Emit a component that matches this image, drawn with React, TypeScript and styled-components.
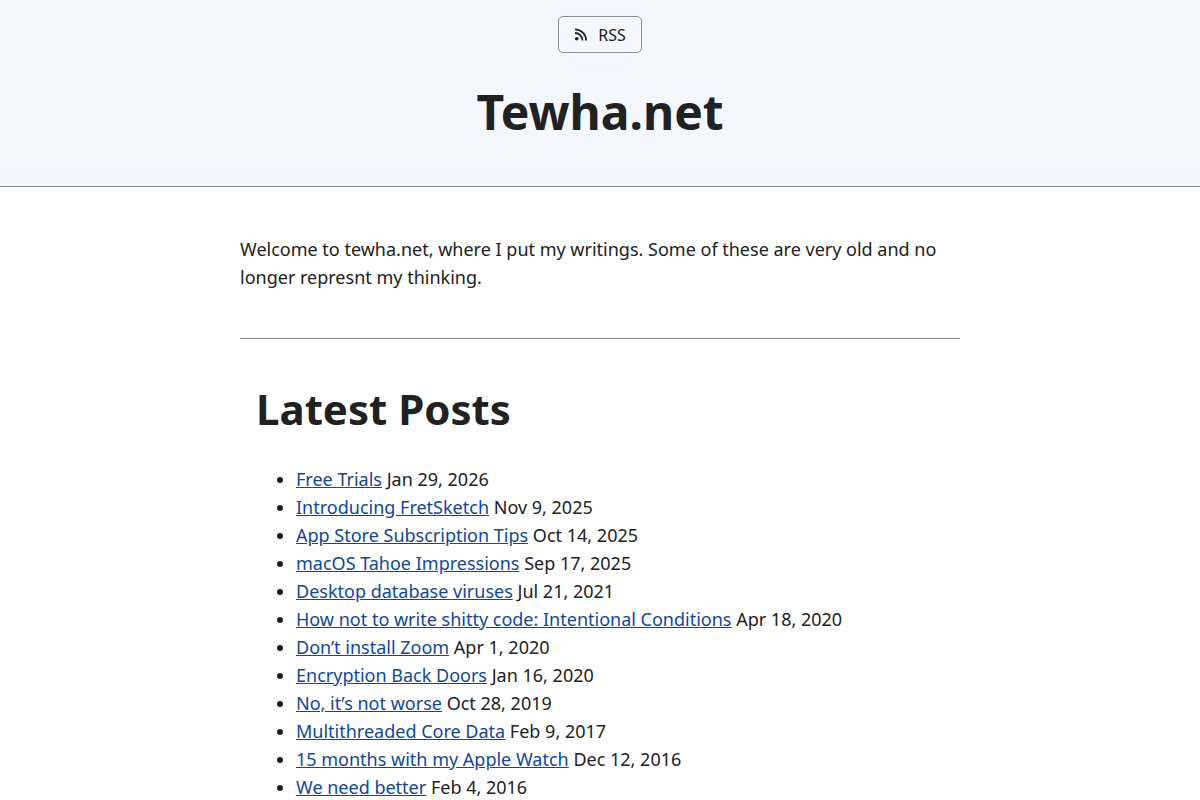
import React from "react";
import styled, { createGlobalStyle } from "styled-components";

const GlobalStyle = createGlobalStyle`
  *, *::before, *::after { box-sizing: border-box; }
  body {
    margin: 0;
    background: #fff;
    color: #212121;
    font-family: "Noto Sans", sans-serif;
    font-size: 18px;
    line-height: 28px;
  }
`;

const Header = styled.header`
  display: flex;
  flex-direction: column;
  align-items: center;
  padding: 16px 16px 32px;
  background: #f5f7ff;
  border-bottom: 1px solid #898a94;
  text-align: center;
`;

const NavLink = styled.a`
  display: inline-flex;
  align-items: center;
  gap: 10px;
  padding: 2px 15px 1px;
  border: 1px solid #898ea4;
  border-radius: 5px;
  color: #212121;
  font-size: 16px;
  line-height: 32px;
  text-decoration: none;
`;

const SiteTitle = styled.h1`
  margin: 32px 0 16px;
  font-size: 48px;
  line-height: 53px;
`;

const Main = styled.main`
  max-width: 752px;
  margin: 0 auto;
  padding: 48px 16px;
`;

const Intro = styled.p`
  margin: 0;
`;

const Rule = styled.hr`
  height: 1px;
  margin: 47px 0 46px;
  border: 0;
  background: #898989;
`;

const Posts = styled.section`
  padding: 0 16px;
`;

const SectionTitle = styled.h2`
  margin: 0 0 32px;
  font-size: 42px;
  line-height: 48px;
`;

const PostList = styled.ul`
  margin: 0;
  padding-left: 40px;
`;

const PostLink = styled.a`
  color: #0d47a1;
  text-decoration: underline;
`;

const posts = [
  ["Free Trials", "Jan 29, 2026"],
  ["Introducing FretSketch", "Nov 9, 2025"],
  ["App Store Subscription Tips", "Oct 14, 2025"],
  ["macOS Tahoe Impressions", "Sep 17, 2025"],
  ["Desktop database viruses", "Jul 21, 2021"],
  ["How not to write shitty code: Intentional Conditions", "Apr 18, 2020"],
  ["Don’t install Zoom", "Apr 1, 2020"],
  ["Encryption Back Doors", "Jan 16, 2020"],
  ["No, it’s not worse", "Oct 28, 2019"],
  ["Multithreaded Core Data", "Feb 9, 2017"],
  ["15 months with my Apple Watch", "Dec 12, 2016"],
  ["We need better", "Feb 4, 2016"],
];

const RssIcon = () => (
  <svg width="14" height="14" viewBox="0 0 14 14" fill="none" stroke="currentColor" strokeWidth="1.8" aria-hidden="true">
    <circle cx="2.7" cy="10.7" r="1.8" fill="currentColor" stroke="none" />
    <path d="M1 1.4A11.1 11.1 0 0 1 12.1 12.5" />
    <path d="M1 5A7.5 7.5 0 0 1 8.5 12.5" />
  </svg>
);

export default function App() {
  return (
    <>
      <GlobalStyle />
      <Header>
        <nav>
          <NavLink href="#rss">
            <RssIcon />
            RSS
          </NavLink>
        </nav>
        <SiteTitle>Tewha.net</SiteTitle>
      </Header>
      <Main>
        <Intro>
          Welcome to tewha.net, where I put my writings. Some of these are very
          old and no longer represnt my thinking.
        </Intro>
        <Rule />
        <Posts>
          <SectionTitle>Latest Posts</SectionTitle>
          <PostList>
            {posts.map(([title, date]) => (
              <li key={title}>
                <PostLink href="#post">{title}</PostLink> <time>{date}</time>
              </li>
            ))}
          </PostList>
        </Posts>
      </Main>
    </>
  );
}
